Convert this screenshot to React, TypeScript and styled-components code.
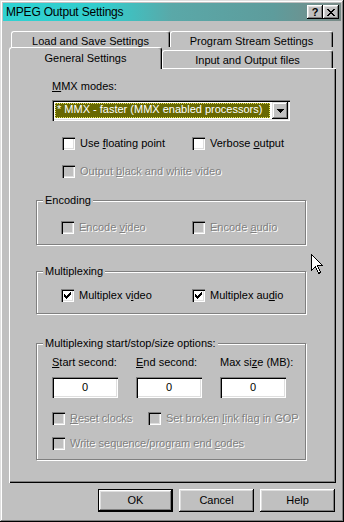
import styled, { createGlobalStyle } from "styled-components"
import { ReactNode } from "react"

const FACE = "#c0c0c0"

const GlobalStyle = createGlobalStyle`
  html, body {
    margin: 0;
    padding: 0;
    background: ${FACE};
  }
  body {
    font-family: "Liberation Sans", Arial, sans-serif;
    font-size: 11px;
    color: #000;
  }
  * {
    box-sizing: border-box;
  }
`

const Window = styled.div`
  position: relative;
  width: 344px;
  height: 522px;
  padding: 3px;
  background: ${FACE};
  box-shadow: inset -1px -1px #000, inset 1px 1px #dfdfdf,
    inset -2px -2px #808080, inset 2px 2px #fff;
  display: flex;
  flex-direction: column;
`

const TitleBar = styled.div`
  height: 18px;
  display: flex;
  align-items: center;
  padding: 0 2px 0 3px;
  background: linear-gradient(
    to right,
    #2fd2d2 0%,
    #33cccc 30%,
    #5aa8a8 50%,
    #5e9c9c 80%,
    #7a8a86 100%
  );
`

const TitleText = styled.div`
  flex: 1;
  font-size: 12px;
  line-height: 18px;
  letter-spacing: -0.2px;
  color: #000;
`

const TitleButton = styled.div<{ $gap?: number }>`
  width: 16px;
  height: 14px;
  margin-left: ${({ $gap }) => $gap ?? 0}px;
  background: ${FACE};
  box-shadow: inset -1px -1px #000, inset 1px 1px #fff,
    inset -2px -2px #808080, inset 2px 2px #dfdfdf;
  display: flex;
  align-items: center;
  justify-content: center;
  font-weight: bold;
  font-size: 11px;
  line-height: 14px;
`

const Body = styled.div`
  padding: 10px 5px 0 6px;
  display: flex;
  flex-direction: column;
`

const TabRow = styled.div<{ $indent: number; $height: number }>`
  display: flex;
  align-items: flex-end;
  height: ${({ $height }) => $height}px;
  padding-left: ${({ $indent }) => $indent}px;
`

const Tab = styled.div<{ $width: number; $height: number; $active?: boolean }>`
  position: relative;
  z-index: ${({ $active }) => ($active ? 2 : 1)};
  width: ${({ $width }) => $width}px;
  height: ${({ $height }) => $height}px;
  margin-bottom: ${({ $active }) => ($active ? -1 : 0)}px;
  background: ${FACE};
  border-top: 1px solid #fff;
  border-left: 1px solid #fff;
  border-right: 1px solid #000;
  border-radius: 3px 3px 0 0;
  box-shadow: inset -1px 0 #808080;
  text-align: center;
  padding-top: ${({ $active }) => ($active ? 4 : 3)}px;
  line-height: 13px;
`

const Panel = styled.div`
  width: 327px;
  padding: 12px 30px 23px 27px;
  background: ${FACE};
  box-shadow: inset 1px 1px #fff, inset -1px -1px #000, inset -2px -2px #808080;
  display: flex;
  flex-direction: column;
`

const Section = styled.div`
  padding-left: 16px;
  display: flex;
  flex-direction: column;
`

const Label = styled.div`
  line-height: 13px;
`

const Combo = styled.div`
  margin-top: 7px;
  width: 238px;
  height: 21px;
  padding: 2px;
  background: #fff;
  box-shadow: inset 1px 1px #808080, inset 2px 2px #000, inset -1px -1px #fff,
    inset -2px -2px #dfdfdf;
  display: flex;
  gap: 2px;
`

const ComboValue = styled.div`
  flex: 1;
  margin: 1px 0 1px 1px;
  padding-left: 2px;
  background: #686800;
  color: #fff;
  line-height: 13px;
  outline: 1px dotted #e8e860;
  outline-offset: -1px;
  white-space: nowrap;
  overflow: hidden;
`

const DropButton = styled.div`
  width: 16px;
  height: 17px;
  background: ${FACE};
  box-shadow: inset -1px -1px #000, inset 1px 1px #dfdfdf,
    inset -2px -2px #808080, inset 2px 2px #fff;
  display: flex;
  align-items: center;
  justify-content: center;
`

const CheckGrid = styled.div<{ $top: number; $left: number; $col: number }>`
  margin-top: ${({ $top }) => $top}px;
  margin-left: ${({ $left }) => $left}px;
  display: grid;
  grid-template-columns: ${({ $col }) => $col}px 1fr;
`

const CheckRow = styled.label<{ $disabled?: boolean }>`
  display: flex;
  align-items: center;
  gap: 5px;
  height: 13px;
  line-height: 13px;
  white-space: nowrap;
  color: ${({ $disabled }) => ($disabled ? "#808080" : "#000")};
  text-shadow: ${({ $disabled }) => ($disabled ? "1px 1px 0 #fff" : "none")};
`

const Box = styled.span<{ $disabled?: boolean }>`
  flex: none;
  width: 13px;
  height: 13px;
  background: ${({ $disabled }) => ($disabled ? FACE : "#fff")};
  box-shadow: inset 1px 1px #808080, inset 2px 2px #000, inset -1px -1px #fff,
    inset -2px -2px #dfdfdf;
  display: flex;
  align-items: center;
  justify-content: center;
`

const Group = styled.div<{ $top: number; $height: number; $pt: number; $pl: number }>`
  position: relative;
  margin-top: ${({ $top }) => $top}px;
  width: 270px;
  height: ${({ $height }) => $height}px;
  padding: ${({ $pt, $pl }) => `${$pt}px 0 0 ${$pl}px`};
  border: 1px solid #808080;
  box-shadow: 1px 1px 0 #fff, inset 1px 1px 0 #fff;
  display: flex;
  flex-direction: column;
`

const Caption = styled.span`
  position: absolute;
  top: -7px;
  left: 6px;
  padding: 0 2px 0 2px;
  background: ${FACE};
  line-height: 13px;
`

const FieldRow = styled.div<{ $top?: number }>`
  margin-top: ${({ $top }) => $top ?? 0}px;
  display: flex;
  gap: 18px;
`

const FieldCol = styled.div`
  width: 66px;
  display: flex;
  flex-direction: column;
  gap: 8px;
  white-space: nowrap;
`

const NumberInput = styled.div`
  width: 66px;
  height: 21px;
  background: #fff;
  box-shadow: inset 1px 1px #808080, inset 2px 2px #000, inset -1px -1px #fff,
    inset -2px -2px #dfdfdf;
  text-align: center;
  line-height: 21px;
`

const ButtonRow = styled.div`
  margin-top: 6px;
  padding-right: 1px;
  display: flex;
  justify-content: flex-end;
  gap: 6px;
`

const Button = styled.div<{ $default?: boolean }>`
  width: 75px;
  height: 23px;
  background: ${FACE};
  border: ${({ $default }) => ($default ? "1px solid #000" : "none")};
  box-shadow: inset -1px -1px #000, inset 1px 1px #fff,
    inset -2px -2px #808080, inset 2px 2px #dfdfdf;
  display: flex;
  align-items: center;
  justify-content: center;
  line-height: 13px;
`

const Cursor = styled.svg`
  position: absolute;
  left: 311px;
  top: 254px;
`

const Check = () => (
  <svg width="7" height="7" viewBox="0 0 7 7" shapeRendering="crispEdges">
    <path
      d="M0 2h1v3H0z M1 3h1v3H1z M2 4h1v3H2z M3 3h1v3H3z M4 2h1v3H4z M5 1h1v3H5z M6 0h1v3H6z"
      fill="#000"
    />
  </svg>
)

type CheckProps = { checked?: boolean; disabled?: boolean; children: ReactNode }

const CheckBox = ({ checked, disabled, children }: CheckProps) => (
  <CheckRow $disabled={disabled}>
    <Box $disabled={disabled}>{checked && <Check />}</Box>
    <span>{children}</span>
  </CheckRow>
)

export default function App() {
  return (
    <>
      <GlobalStyle />
      <Window>
        <TitleBar>
          <TitleText>MPEG Output Settings</TitleText>
          <TitleButton>?</TitleButton>
          <TitleButton $gap={0}>
            <svg width="8" height="7" viewBox="0 0 8 7" shapeRendering="crispEdges">
              <path
                d="M0 0h2v1H0z M6 0h2v1H6z M1 1h2v1H1z M5 1h2v1H5z M2 2h4v1H2z M3 3h2v1H3z M2 4h4v1H2z M1 5h2v1H1z M5 5h2v1H5z M0 6h2v1H0z M6 6h2v1H6z"
                fill="#000"
              />
            </svg>
          </TitleButton>
        </TitleBar>

        <Body>
          <TabRow $indent={2} $height={16}>
            <Tab $width={159} $height={16}>Load and Save Settings</Tab>
            <Tab $width={163} $height={16}>Program Stream Settings</Tab>
          </TabRow>
          <TabRow $indent={0} $height={21}>
            <Tab $width={153} $height={22} $active>
              General Settings
            </Tab>
            <Tab $width={171} $height={18}>Input and Output files</Tab>
          </TabRow>

          <Panel>
            <Section>
              <Label>
                <u>M</u>MX modes:
              </Label>
              <Combo>
                <ComboValue>* MMX - faster (MMX enabled processors)</ComboValue>
                <DropButton>
                  <svg width="7" height="4" viewBox="0 0 7 4" shapeRendering="crispEdges">
                    <path d="M0 0h7v1H0z M1 1h5v1H1z M2 2h3v1H2z M3 3h1v1H3z" fill="#000" />
                  </svg>
                </DropButton>
              </Combo>
              <CheckGrid $top={16} $left={10} $col={130}>
                <CheckBox>
                  Use <u>f</u>loating point
                </CheckBox>
                <CheckBox>
                  Verbose <u>o</u>utput
                </CheckBox>
              </CheckGrid>
              <CheckGrid $top={15} $left={10} $col={130}>
                <CheckBox disabled>
                  Output <u>b</u>lack and white video
                </CheckBox>
              </CheckGrid>
            </Section>

            <Group $top={22} $height={45} $pt={20} $pl={24}>
              <Caption>Encoding</Caption>
              <CheckGrid $top={0} $left={0} $col={131}>
                <CheckBox disabled>
                  Encode <u>v</u>ideo
                </CheckBox>
                <CheckBox disabled>
                  Encode <u>a</u>udio
                </CheckBox>
              </CheckGrid>
            </Group>

            <Group $top={26} $height={43} $pt={17} $pl={24}>
              <Caption>Multiplexing</Caption>
              <CheckGrid $top={0} $left={0} $col={131}>
                <CheckBox checked>
                  Multiplex v<u>i</u>deo
                </CheckBox>
                <CheckBox checked>
                  Multiplex au<u>d</u>io
                </CheckBox>
              </CheckGrid>
            </Group>

            <Group $top={29} $height={117} $pt={12} $pl={15}>
              <Caption>Multiplexing start/stop/size options:</Caption>
              <FieldRow>
                <FieldCol>
                  <Label>
                    <u>S</u>tart second:
                  </Label>
                  <NumberInput>0</NumberInput>
                </FieldCol>
                <FieldCol>
                  <Label>
                    <u>E</u>nd second:
                  </Label>
                  <NumberInput>0</NumberInput>
                </FieldCol>
                <FieldCol>
                  <Label>
                    Max si<u>z</u>e (MB):
                  </Label>
                  <NumberInput>0</NumberInput>
                </FieldCol>
              </FieldRow>
              <CheckGrid $top={14} $left={0} $col={96}>
                <CheckBox disabled>
                  <u>R</u>eset clocks
                </CheckBox>
                <CheckBox disabled>
                  Set broken <u>l</u>ink flag in GOP
                </CheckBox>
              </CheckGrid>
              <CheckGrid $top={12} $left={0} $col={200}>
                <CheckBox disabled>
                  Write sequence/program end <u>c</u>odes
                </CheckBox>
              </CheckGrid>
            </Group>
          </Panel>

          <ButtonRow>
            <Button $default>OK</Button>
            <Button>Cancel</Button>
            <Button>Help</Button>
          </ButtonRow>
        </Body>

        <Cursor width="12" height="20" viewBox="0 0 12 20" shapeRendering="crispEdges">
          <path
            d="M0.5 0.5 L0.5 16.5 L4.5 12.5 L7.5 19.5 L9.5 18.5 L6.5 11.5 L11.5 11.5 Z"
            fill="#fff"
            stroke="#000"
            strokeWidth="1"
          />
        </Cursor>
      </Window>
    </>
  )
}
